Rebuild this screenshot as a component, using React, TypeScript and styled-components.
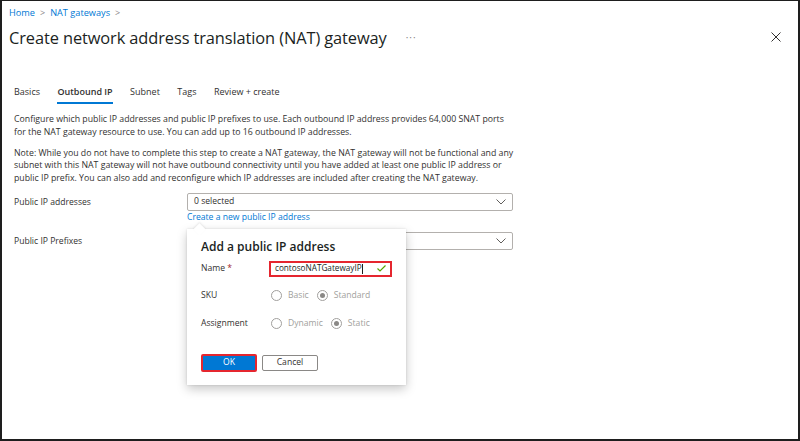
import React from "react";
import styled, { createGlobalStyle } from "styled-components";

const Global = createGlobalStyle`
  html, body { margin: 0; padding: 0; background: #fff; }
  body { font-family: "Open Sans", "Noto Sans", Arial, sans-serif; color: #323130; }
`;

const Frame = styled.div`
  position: relative;
  width: 800px;
  height: 441px;
  box-sizing: border-box;
  border: 2px solid #1e1e1e;
  border-top-width: 1px;
  background: #fff;
  overflow: hidden;
`;

const Breadcrumb = styled.div`
  display: flex;
  align-items: center;
  gap: 5px;
  padding: 6px 0 0 7px;
  height: 12px;
  font-size: 9.2px;
  color: #0078d4;
  line-height: 12px;
`;

const Sep = styled.span`
  color: #8a8886;
  font-size: 9px;
`;

const Header = styled.div`
  display: flex;
  align-items: center;
  padding: 6px 17px 0 7px;
  height: 24px;
`;

const Title = styled.h1`
  margin: 0;
  font-size: 16.4px;
  font-weight: 500;
  letter-spacing: -0.1px;
  color: #201f1e;
  white-space: nowrap;
`;

const More = styled.span`
  margin-left: 19px;
  font-size: 10px;
  color: #8a8886;
  letter-spacing: 1px;
  line-height: 1;
`;

const Close = styled.span`
  margin-left: auto;
  display: flex;
`;

const Tabs = styled.div`
  display: flex;
  gap: 17.5px;
  padding: 37px 0 0 12px;
  font-size: 9px;
  line-height: 12px;
`;

const Tab = styled.div<{ $active?: boolean }>`
  padding-bottom: 4px;
  color: #323130;
  font-weight: ${(p) => (p.$active ? 600 : 400)};
  border-bottom: 2px solid ${(p) => (p.$active ? "#0078d4" : "transparent")};
  white-space: nowrap;
`;

const Body = styled.div`
  padding: 9px 0 0 12px;
  font-size: 8.75px;
  line-height: 12.5px;
`;

const Para = styled.p`
  margin: 0 0 8.5px 0;
  white-space: nowrap;
`;

const Row = styled.div<{ $gap: number }>`
  display: flex;
  align-items: flex-start;
  margin-top: ${(p) => p.$gap}px;
`;

const Label = styled.div`
  width: 173px;
  padding-top: 3px;
  font-size: 8.6px;
  color: #323130;
`;

const Field = styled.div`
  position: relative;
  display: flex;
  flex-direction: column;
`;

const Select = styled.div`
  box-sizing: border-box;
  width: 326px;
  height: 18px;
  border: 1px solid #b3b0ad;
  border-radius: 2px;
  display: flex;
  align-items: center;
  justify-content: space-between;
  padding: 0 6px 0 6px;
  font-size: 8.6px;
  color: #323130;
`;

const Link = styled.div`
  color: #0078d4;
  font-size: 8.6px;
  line-height: 12px;
`;

const Callout = styled.div`
  position: absolute;
  z-index: 2;
  left: 0;
  top: calc(100% + 6px);
  width: 219px;
  height: 156px;
  box-sizing: border-box;
  background: #fff;
  box-shadow: 0 4px 10px rgba(0, 0, 0, 0.22), 0 0 2px rgba(0, 0, 0, 0.12);
  padding: 10px 14px 0 14px;
  &::before {
    content: "";
    position: absolute;
    left: 8px;
    top: -3.5px;
    width: 9px;
    height: 9px;
    background: #fff;
    transform: rotate(45deg);
    box-shadow: -1px -1px 2px rgba(0, 0, 0, 0.08);
  }
`;

const CalloutTitle = styled.div`
  position: relative;
  font-size: 12px;
  font-weight: 600;
  color: #201f1e;
  line-height: 16px;
  margin-bottom: 6px;
`;

const FormRow = styled.div<{ $gap: number }>`
  display: flex;
  align-items: center;
  height: 16px;
  margin-top: ${(p) => p.$gap}px;
`;

const FLabel = styled.div`
  width: 68px;
  font-size: 8.6px;
  color: #323130;
`;

const Req = styled.span`
  color: #a4262c;
`;

const Input = styled.div`
  box-sizing: border-box;
  width: 123px;
  height: 16px;
  border: 2px solid #e5262f;
  display: flex;
  align-items: center;
  justify-content: space-between;
  padding: 0 4px 0 4px;
  font-size: 8.2px;
  color: #201f1e;
`;

const Caret = styled.span`
  display: inline-block;
  width: 1px;
  height: 10px;
  background: #201f1e;
  vertical-align: middle;
`;

const Radios = styled.div`
  display: flex;
  align-items: center;
  gap: 8px;
  margin-left: 2px;
`;

const RadioItem = styled.div`
  display: flex;
  align-items: center;
  gap: 6px;
  color: #a19f9d;
  font-size: 8.6px;
`;

const Circle = styled.span<{ $on?: boolean }>`
  box-sizing: border-box;
  width: 11px;
  height: 11px;
  border: 1px solid #a19f9d;
  border-radius: 50%;
  display: flex;
  align-items: center;
  justify-content: center;
  &::after {
    content: "";
    width: 5px;
    height: 5px;
    border-radius: 50%;
    background: ${(p) => (p.$on ? "#8a8886" : "transparent")};
  }
`;

const Buttons = styled.div`
  display: flex;
  align-items: center;
  gap: 5px;
  margin-top: 22px;
`;

const Btn = styled.div<{ $primary?: boolean }>`
  box-sizing: border-box;
  width: 56px;
  height: ${(p) => (p.$primary ? 18 : 16)}px;
  display: flex;
  align-items: center;
  justify-content: center;
  font-size: 8.6px;
  color: ${(p) => (p.$primary ? "#fff" : "#323130")};
  background: ${(p) => (p.$primary ? "#0078d4" : "#fff")};
  border: ${(p) => (p.$primary ? "2px solid #e5262f" : "1px solid #8a8886")};
  border-radius: 2px;
`;

const Chevron = () => (
  <svg width="10" height="6" viewBox="0 0 10 6">
    <path d="M0.5 0.5 L5 5 L9.5 0.5" stroke="#605e5c" strokeWidth="1" fill="none" />
  </svg>
);

export default function App() {
  return (
    <>
      <Global />
      <Frame>
        <Breadcrumb>
          <span>Home</span>
          <Sep>&gt;</Sep>
          <span>NAT gateways</span>
          <Sep>&gt;</Sep>
        </Breadcrumb>
        <Header>
          <Title>Create network address translation (NAT) gateway</Title>
          <More>···</More>
          <Close>
            <svg width="10" height="10" viewBox="0 0 10 10">
              <path d="M0.5 0.5 L9.5 9.5 M9.5 0.5 L0.5 9.5" stroke="#323130" strokeWidth="1" />
            </svg>
          </Close>
        </Header>
        <Tabs>
          <Tab>Basics</Tab>
          <Tab $active>Outbound IP</Tab>
          <Tab>Subnet</Tab>
          <Tab>Tags</Tab>
          <Tab>Review + create</Tab>
        </Tabs>
        <Body>
          <Para>
            Configure which public IP addresses and public IP prefixes to use. Each outbound IP address provides 64,000 SNAT ports
            <br />
            for the NAT gateway resource to use. You can add up to 16 outbound IP addresses.
          </Para>
          <Para>
            Note: While you do not have to complete this step to create a NAT gateway, the NAT gateway will not be functional and any
            <br />
            subnet with this NAT gateway will not have outbound connectivity until you have added at least one public IP address or
            <br />
            public IP prefix. You can also add and reconfigure which IP addresses are included after creating the NAT gateway.
          </Para>
          <Row $gap={7}>
            <Label>Public IP addresses</Label>
            <Field>
              <Select>
                <span>0 selected</span>
                <Chevron />
              </Select>
              <Link>Create a new public IP address</Link>
              <Callout>
                <CalloutTitle>Add a public IP address</CalloutTitle>
                <FormRow $gap={0}>
                  <FLabel>
                    Name <Req>*</Req>
                  </FLabel>
                  <Input>
                    <span>
                      contosoNATGatewayIP<Caret />
                    </span>
                    <svg width="9" height="7" viewBox="0 0 9 7">
                      <path d="M0.5 3.5 L3 6 L8.5 0.5" stroke="#57a300" strokeWidth="1.2" fill="none" />
                    </svg>
                  </Input>
                </FormRow>
                <FormRow $gap={11}>
                  <FLabel>SKU</FLabel>
                  <Radios>
                    <RadioItem>
                      <Circle />
                      Basic
                    </RadioItem>
                    <RadioItem>
                      <Circle $on />
                      Standard
                    </RadioItem>
                  </Radios>
                </FormRow>
                <FormRow $gap={12}>
                  <FLabel>Assignment</FLabel>
                  <Radios>
                    <RadioItem>
                      <Circle />
                      Dynamic
                    </RadioItem>
                    <RadioItem>
                      <Circle $on />
                      Static
                    </RadioItem>
                  </Radios>
                </FormRow>
                <Buttons>
                  <Btn $primary>OK</Btn>
                  <Btn>Cancel</Btn>
                </Buttons>
              </Callout>
            </Field>
          </Row>
          <Row $gap={9}>
            <Label>Public IP Prefixes</Label>
            <Field>
              <Select>
                <span />
                <Chevron />
              </Select>
            </Field>
          </Row>
        </Body>
      </Frame>
    </>
  );
}
